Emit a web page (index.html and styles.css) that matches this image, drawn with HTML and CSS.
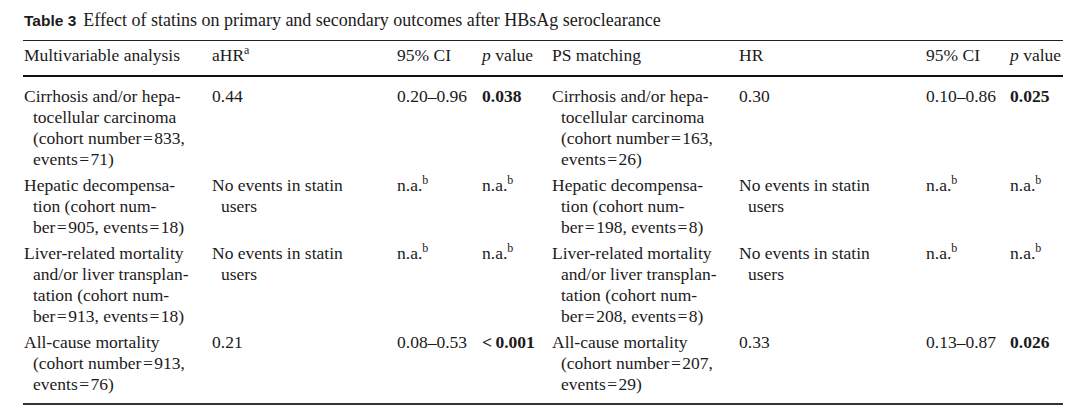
FILE: index.html
```html
<!DOCTYPE html>
<html>
<head>
<meta charset="utf-8">
<link rel="stylesheet" href="styles.css">
</head>
<body>
<div class="page">
  <div class="caption"><span class="label">Table 3</span>Effect of statins on primary and secondary outcomes after HBsAg seroclearance</div>
  <table class="tbl">
    <colgroup>
      <col class="c1"><col class="c2"><col class="c3"><col class="c4">
      <col class="c5"><col class="c6"><col class="c7"><col class="c8">
    </colgroup>
    <thead>
      <tr>
        <th>Multivariable analysis</th>
        <th>aHR<sup>a</sup></th>
        <th>95% CI</th>
        <th><i>p</i> value</th>
        <th>PS matching</th>
        <th>HR</th>
        <th>95% CI</th>
        <th><i>p</i> value</th>
      </tr>
    </thead>
    <tbody>
      <tr>
        <td><div class="hang">Cirrhosis and/or hepa-<br>tocellular carcinoma<br>(cohort number<span class="eq">=</span>833,<br>events<span class="eq">=</span>71)</div></td>
        <td>0.44</td>
        <td>0.20–0.96</td>
        <td><b>0.038</b></td>
        <td><div class="hang">Cirrhosis and/or hepa-<br>tocellular carcinoma<br>(cohort number<span class="eq">=</span>163,<br>events<span class="eq">=</span>26)</div></td>
        <td>0.30</td>
        <td>0.10–0.86</td>
        <td><b>0.025</b></td>
      </tr>
      <tr>
        <td><div class="hang">Hepatic decompensa-<br>tion (cohort num-<br>ber<span class="eq">=</span>905, events<span class="eq">=</span>18)</div></td>
        <td><div class="hang">No events in statin<br>users</div></td>
        <td>n.a.<sup>b</sup></td>
        <td>n.a.<sup>b</sup></td>
        <td><div class="hang">Hepatic decompensa-<br>tion (cohort num-<br>ber<span class="eq">=</span>198, events<span class="eq">=</span>8)</div></td>
        <td><div class="hang">No events in statin<br>users</div></td>
        <td>n.a.<sup>b</sup></td>
        <td>n.a.<sup>b</sup></td>
      </tr>
      <tr>
        <td><div class="hang">Liver-related mortality<br>and/or liver transplan-<br>tation (cohort num-<br>ber<span class="eq">=</span>913, events<span class="eq">=</span>18)</div></td>
        <td><div class="hang">No events in statin<br>users</div></td>
        <td>n.a.<sup>b</sup></td>
        <td>n.a.<sup>b</sup></td>
        <td><div class="hang">Liver-related mortality<br>and/or liver transplan-<br>tation (cohort num-<br>ber<span class="eq">=</span>208, events<span class="eq">=</span>8)</div></td>
        <td><div class="hang">No events in statin<br>users</div></td>
        <td>n.a.<sup>b</sup></td>
        <td>n.a.<sup>b</sup></td>
      </tr>
      <tr>
        <td><div class="hang">All-cause mortality<br>(cohort number<span class="eq">=</span>913,<br>events<span class="eq">=</span>76)</div></td>
        <td>0.21</td>
        <td>0.08–0.53</td>
        <td><b>&lt;&#8201;0.001</b></td>
        <td><div class="hang">All-cause mortality<br>(cohort number<span class="eq">=</span>207,<br>events<span class="eq">=</span>29)</div></td>
        <td>0.33</td>
        <td>0.13–0.87</td>
        <td><b>0.026</b></td>
      </tr>
    </tbody>
  </table>
</div>
</body>
</html>
```
FILE: styles.css
```css
html, body {
  margin: 0;
  padding: 0;
  background: #ffffff;
}
body {
  font-family: "Liberation Serif", "Times New Roman", serif;
  font-size: 17.5px;
  color: #1c1a1b;
}
.page {
  padding: 9px 0 0 23px;
  width: 1040px;
}
.caption {
  font-size: 18px;
  line-height: 22px;
  height: 22px;
  margin-left: 1px;
  margin-bottom: 9px;
  white-space: nowrap;
}
.label {
  font-family: "Liberation Sans", Arial, sans-serif;
  font-weight: bold;
  font-size: 15.5px;
  margin-right: 7px;
}
.tbl {
  border-collapse: collapse;
  table-layout: fixed;
  width: 1040px;
  border-top: 1px solid #222;
  border-bottom: 2px solid #333;
}
.c1 { width: 189px; }
.c2 { width: 185px; }
.c3 { width: 85px; }
.c4 { width: 70px; }
.c5 { width: 187px; }
.c6 { width: 187px; }
.c7 { width: 84px; }
.c8 { width: 53px; }
th, td {
  text-align: left;
  vertical-align: top;
  font-weight: normal;
  white-space: nowrap;
  line-height: 21px;
  padding: 5px 0 0 0;
}
th:first-child, td:first-child {
  padding-left: 1px;
}
thead th {
  padding-top: 4px;
  padding-bottom: 9px;
  border-bottom: 2px solid #111;
}
tbody tr:first-child td {
  padding-top: 9px;
}
tbody tr:last-child td {
  padding-bottom: 8px;
}
.hang {
  padding-left: 9px;
  text-indent: -9px;
}
.eq {
  margin: 0 1.5px;
}
sup {
  font-size: 12px;
  line-height: 0;
  vertical-align: 7px;
}
b {
  font-weight: bold;
}
```
